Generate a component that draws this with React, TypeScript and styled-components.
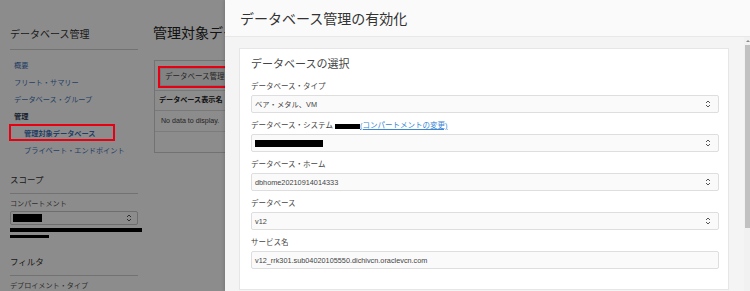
import { FC } from 'react'
import styled, { createGlobalStyle, css } from 'styled-components'

const GlobalStyle = createGlobalStyle`
  body {
    margin: 0;
    font-family: 'Liberation Sans', 'Noto Sans CJK JP', sans-serif;
    color: #333;
  }
`

const SelectArrows: FC = () => (
  <svg width="6" height="10" viewBox="0 0 6 10" fill="none">
    <path d="M1 4 L3 2 L5 4" stroke="#555" strokeWidth="1" />
    <path d="M1 6 L3 8 L5 6" stroke="#555" strokeWidth="1" />
  </svg>
)

type Field = { label: string; value: string; select: boolean }

const fields: Field[] = [
  { label: 'データベース・ホーム', value: 'dbhome20210914014333', select: true },
  { label: 'データベース', value: 'v12', select: true },
  { label: 'サービス名', value: 'v12_rrk301.sub04020105550.dichivcn.oraclevcn.com', select: false },
]

const navItems = [
  { text: '概要' },
  { text: 'フリート・サマリー' },
  { text: 'データベース・グループ' },
  { text: '管理', bold: true },
  { text: '管理対象データベース', bold: true, indent: true, highlighted: true },
  { text: 'プライベート・エンドポイント', indent: true },
]

export default function App() {
  return (
    <Screen>
      <GlobalStyle />
      <Page>
        <Sidebar>
          <SideHeading $size={10}>データベース管理</SideHeading>
          <Nav>
            {navItems.map((item) => (
              <NavItem
                key={item.text}
                $bold={item.bold}
                $indent={item.indent}
                $highlighted={item.highlighted}
              >
                {item.text}
              </NavItem>
            ))}
          </Nav>
          <SideHeading $size={8.5} $gap={15}>スコープ</SideHeading>
          <SideLabel>コンパートメント</SideLabel>
          <SideSelect>
            <Redacted $w={29} $h={8} />
            <SelectArrows />
          </SideSelect>
          <Redacted $w={132} $h={5} $block $top={3} />
          <Redacted $w={39} $h={4} $block $top={3} />
          <SideHeading $size={8.5} $gap={18}>フィルタ</SideHeading>
          <SideLabel $top={5}>デプロイメント・タイプ</SideLabel>
        </Sidebar>
        <Main>
          <MainTitle>管理対象データベース</MainTitle>
          <TableCard>
            <Toolbar>
              <ToolButton>データベース管理の有効化</ToolButton>
            </Toolbar>
            <TableHead>データベース表示名</TableHead>
            <TableRow>No data to display.</TableRow>
            <TableRow />
          </TableCard>
        </Main>
        <Dim />
      </Page>
      <Panel>
        <PanelHeader>データベース管理の有効化</PanelHeader>
        <PanelBody>
          <Card>
            <CardTitle>データベースの選択</CardTitle>
            <FieldGroup>
              <Label>データベース・タイプ</Label>
              <Select>
                <span>ベア・メタル、VM</span>
                <SelectArrows />
              </Select>
            </FieldGroup>
            <FieldGroup>
              <Label>
                データベース・システム <Redacted $w={25} $h={5} />
                <ChangeLink>(コンパートメントの変更)</ChangeLink>
              </Label>
              <Select>
                <Redacted $w={68} $h={7} />
                <SelectArrows />
              </Select>
            </FieldGroup>
            {fields.map((f) => (
              <FieldGroup key={f.label}>
                <Label>{f.label}</Label>
                <Select $input={!f.select}>
                  <span>{f.value}</span>
                  {f.select && <SelectArrows />}
                </Select>
              </FieldGroup>
            ))}
          </Card>
          <Scrollbar>
            <ScrollArrow />
            <ScrollThumb />
          </Scrollbar>
        </PanelBody>
      </Panel>
    </Screen>
  )
}

const Screen = styled.div`
  display: flex;
  width: 750px;
  height: 291px;
  overflow: hidden;
`

const Page = styled.div`
  position: relative;
  flex: none;
  width: 225px;
  display: flex;
  background: #fff;
  overflow: hidden;
`

const Dim = styled.div`
  position: absolute;
  inset: 0;
  background: rgba(0, 0, 0, 0.45);
  z-index: 1;
`

const redBox = css`
  &::after {
    content: '';
    position: absolute;
    border: 2.5px solid #e60012;
    z-index: 2;
  }
`

const Sidebar = styled.div`
  flex: none;
  width: 128px;
  padding: 28px 10px 0 10px;
  display: flex;
  flex-direction: column;
  align-items: flex-start;
`

const SideHeading = styled.div<{ $size: number; $gap?: number }>`
  align-self: stretch;
  font-size: ${(p) => p.$size}px;
  line-height: ${(p) => (p.$size > 9 ? 14 : 12)}px;
  margin-top: ${(p) => p.$gap ?? 0}px;
  padding-bottom: 7px;
  border-bottom: 1px solid #cfcfcf;
  color: #333;
`

const Nav = styled.div`
  align-self: stretch;
  display: flex;
  flex-direction: column;
  margin-top: 7px;
`

const NavItem = styled.div<{ $bold?: boolean; $indent?: boolean; $highlighted?: boolean }>`
  position: relative;
  font-size: 7.2px;
  line-height: 17px;
  padding-left: ${(p) => (p.$indent ? 14 : 4)}px;
  font-weight: ${(p) => (p.$bold ? 700 : 400)};
  color: ${(p) => (p.$bold && !p.$indent ? '#2a3a55' : '#3f72b8')};
  ${(p) =>
    p.$highlighted &&
    css`
      ${redBox}
      &::after {
        left: -1px;
        top: -1px;
        width: 102px;
        height: 13px;
      }
    `}
`

const SideLabel = styled.div<{ $top?: number }>`
  font-size: 7.1px;
  line-height: 10px;
  color: #555;
  margin-top: ${(p) => p.$top ?? 5}px;
`

const SideSelect = styled.div`
  align-self: stretch;
  margin-top: 2px;
  height: 15px;
  border: 1px solid #c8c8c8;
  border-radius: 2px;
  display: flex;
  align-items: center;
  justify-content: space-between;
  padding: 0 5px 0 2px;
`

const Redacted = styled.span<{ $w: number; $h: number; $block?: boolean; $top?: number }>`
  display: ${(p) => (p.$block ? 'block' : 'inline-block')};
  width: ${(p) => p.$w}px;
  height: ${(p) => p.$h}px;
  margin-top: ${(p) => p.$top ?? 0}px;
  background: #000;
  vertical-align: middle;
`

const Main = styled.div`
  flex: none;
  width: 400px;
  padding: 24px 0 0 5px;
`

const MainTitle = styled.div`
  font-size: 14px;
  line-height: 18px;
  color: #222;
  white-space: nowrap;
`

const TableCard = styled.div`
  margin-top: 18px;
  margin-left: 1px;
  border: 1px solid #cfcfcf;
  background: #fff;
`

const Toolbar = styled.div`
  padding: 4px 5px;
  border-bottom: 1px solid #dcdcdc;
`

const ToolButton = styled.div`
  position: relative;
  display: inline-block;
  font-size: 7.5px;
  line-height: 16px;
  padding: 0 4px;
  background: #efefef;
  border: 1px solid #d8d8d8;
  color: #444;
  ${redBox}
  &::after {
    left: -3px;
    top: -3px;
    right: -3px;
    bottom: -3px;
  }
`

const TableHead = styled.div`
  font-size: 7.1px;
  font-weight: 700;
  line-height: 19px;
  padding-left: 4px;
  border-bottom: 1px solid #dcdcdc;
  color: #222;
`

const TableRow = styled.div`
  font-size: 7.1px;
  line-height: 20px;
  height: 20px;
  padding-left: 6px;
  border-bottom: 1px solid #e2e2e2;
  color: #444;

  &:last-child {
    border-bottom: none;
  }
`

const Panel = styled.div`
  flex: 1;
  display: flex;
  flex-direction: column;
  background: #f4f4f4;
  box-shadow: -1px 0 3px rgba(0, 0, 0, 0.15);
  z-index: 3;
`

const PanelHeader = styled.div`
  flex: none;
  height: 36px;
  display: flex;
  align-items: center;
  padding-left: 15px;
  background: #fafafa;
  border-bottom: 1px solid #e8e8e8;
  font-size: 14px;
  color: #333;
`

const PanelBody = styled.div`
  flex: 1;
  display: flex;
  align-items: flex-start;
  padding-left: 14px;
`

const Card = styled.div`
  flex: none;
  width: 468px;
  margin-top: 11px;
  padding: 8px 9px 20px 11px;
  background: #fff;
  border: 1px solid #e6e6e6;
  display: flex;
  flex-direction: column;
  gap: 8px;
`

const CardTitle = styled.div`
  font-size: 11px;
  line-height: 14px;
  color: #444;
  margin-bottom: 3px;
`

const FieldGroup = styled.div`
  display: flex;
  flex-direction: column;
  gap: 3px;
`

const Label = styled.div`
  font-size: 7.5px;
  line-height: 10px;
  color: #444;
  white-space: nowrap;
`

const ChangeLink = styled.span`
  color: #3a86d4;
  text-decoration: underline;
`

const Select = styled.div<{ $input?: boolean }>`
  height: 16px;
  display: flex;
  align-items: center;
  justify-content: space-between;
  padding: 0 7px 0 3px;
  border: 1px solid #dedede;
  border-radius: 2px;
  background: #fafafa;
  font-size: 7.3px;
  color: #444;
`

const Scrollbar = styled.div`
  flex: none;
  margin-left: 15px;
  align-self: stretch;
  width: 8px;
  background: #f1f1f1;
  display: flex;
  flex-direction: column;
  align-items: flex-end;
`

const ScrollArrow = styled.div`
  width: 0;
  height: 0;
  margin: 3px 2px 0 0;
  border-left: 2px solid transparent;
  border-right: 2px solid transparent;
  border-bottom: 2px solid #8a8a8a;
`

const ScrollThumb = styled.div`
  margin-top: 3px;
  width: 7px;
  height: 183px;
  background: #c1c1c1;
`
